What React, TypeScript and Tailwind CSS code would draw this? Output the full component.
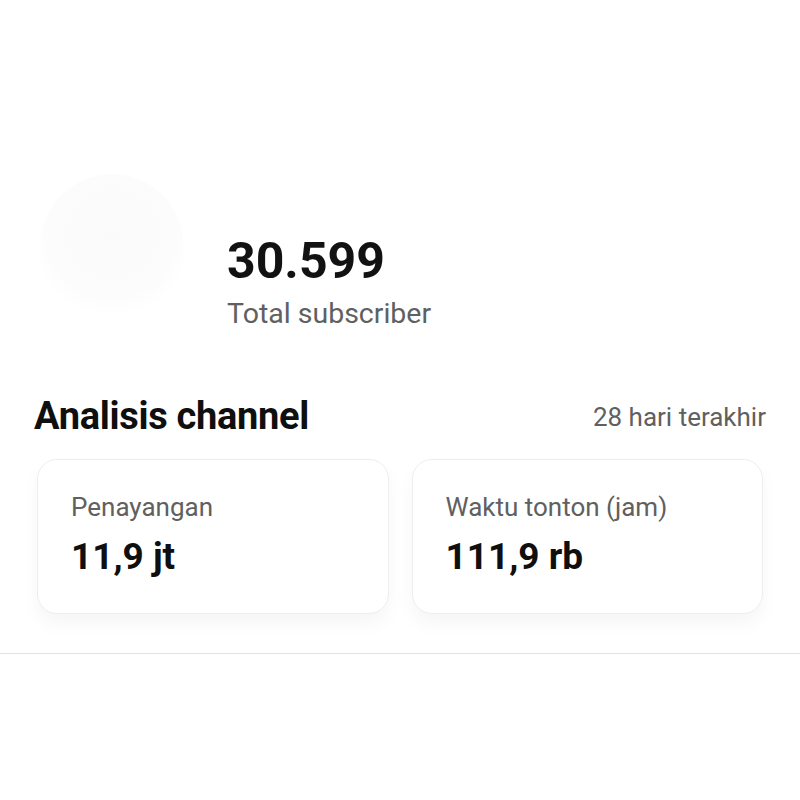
export default function App() {
  const stats = [
    { label: "Penayangan", value: "11,9 jt" },
    { label: "Waktu tonton (jam)", value: "111,9 rb" },
  ];

  return (
    <div className="w-[800px] h-[800px] bg-white font-['Roboto',sans-serif] overflow-hidden">
      {/* channel header */}
      <div className="flex items-start pt-[174px] pl-[40px]">
        <div className="w-[144px] h-[150px] rounded-full bg-[radial-gradient(circle_at_50%_40%,#fafafa,#fcfcfc_55%,#ffffff_72%)]" />
        <div className="ml-[43px] mt-[62px] flex flex-col">
          <span className="text-[50px] leading-none font-bold text-[#121212]">30.599</span>
          <span className="mt-[14px] text-[28.5px] leading-none text-[#606060]">Total subscriber</span>
        </div>
      </div>

      {/* analytics */}
      <div className="mt-[68px] px-[34px]">
        <div className="flex items-start justify-between">
          <h2 className="text-[38px] leading-none font-bold text-[#0f0f0f] tracking-[-0.3px]">Analisis channel</h2>
          <span className="mt-[7px] text-[26px] leading-none text-[#606060]">28 hari terakhir</span>
        </div>

        <div className="mt-[24px] px-[3px] grid grid-cols-2 gap-[23px]">
          {stats.map((s) => (
            <div
              key={s.label}
              className="h-[155px] rounded-[20px] border border-[#eeeeee] bg-white px-[33px] pt-[34px] shadow-[0_10px_18px_rgba(0,0,0,0.04)]"
            >
              <div className="text-[26px] leading-none text-[#606060]">{s.label}</div>
              <div className="mt-[18px] text-[37px] leading-none font-bold text-[#0f0f0f]">{s.value}</div>
            </div>
          ))}
        </div>
      </div>

      <div className="mt-[39px] h-px bg-[#e2e2e2]" />
    </div>
  );
}
